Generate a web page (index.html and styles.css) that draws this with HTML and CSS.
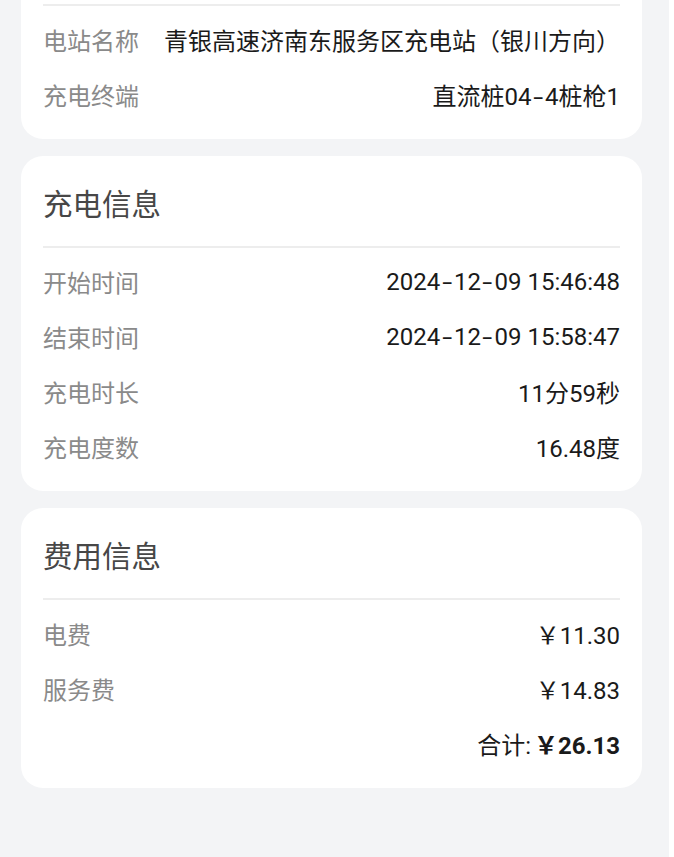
FILE: index.html
```html
<!DOCTYPE html>
<html lang="zh-CN">
<head>
    <meta charset="UTF-8">
    <meta name="viewport" content="width=device-width, initial-scale=1.0">
    <title>订单详情</title>
    <link rel="stylesheet" href="styles.css">
</head>
<body>
    <div class="page">

        <div class="card card-cut">
            <div class="list">
                <div class="row">
                    <span class="label">电站名称</span>
                    <span class="value">青银高速济南东服务区充电站（银川方向）</span>
                </div>
                <div class="row">
                    <span class="label">充电终端</span>
                    <span class="value">直流桩04<span class="dash">-</span>4桩枪1</span>
                </div>
            </div>
        </div>

        <div class="card">
            <div class="card-title">充电信息</div>
            <div class="list">
                <div class="row">
                    <span class="label">开始时间</span>
                    <span class="value">2024<span class="dash">-</span>12<span class="dash">-</span>09 15:46:48</span>
                </div>
                <div class="row">
                    <span class="label">结束时间</span>
                    <span class="value">2024<span class="dash">-</span>12<span class="dash">-</span>09 15:58:47</span>
                </div>
                <div class="row">
                    <span class="label">充电时长</span>
                    <span class="value">11分59秒</span>
                </div>
                <div class="row">
                    <span class="label">充电度数</span>
                    <span class="value">16.48度</span>
                </div>
            </div>
        </div>

        <div class="card">
            <div class="card-title">费用信息</div>
            <div class="list">
                <div class="row">
                    <span class="label">电费</span>
                    <span class="value">￥11.30</span>
                </div>
                <div class="row">
                    <span class="label">服务费</span>
                    <span class="value">￥14.83</span>
                </div>
                <div class="row row-total">
                    <span class="value">合计:<b class="total">￥26.13</b></span>
                </div>
            </div>
        </div>

    </div>
</body>
</html>
```

FILE: styles.css
```css
body {
    margin: 0;
    background-color: #ffffff;
    font-family: Roboto, "Noto Sans CJK SC", sans-serif;
}

.page {
    width: 669px;
    min-height: 100vh;
    box-sizing: border-box;
    background-color: #f3f4f6;
    padding: 0 27px 0 21px;
    display: flex;
    flex-direction: column;
    gap: 17px;
}

.card {
    background-color: #ffffff;
    border-radius: 22px;
    padding: 0 22px;
}

.card-cut {
    border-top-left-radius: 0;
    border-top-right-radius: 0;
    padding-top: 4px;
}

.card-cut .list {
    border-top: 2px solid #ededed;
}

.card-title {
    font-size: 29.5px;
    line-height: 40px;
    color: #474747;
    padding: 29px 0 21px;
    border-bottom: 2px solid #ededed;
}

.list {
    padding: 6px 0 17px;
}

.row {
    height: 55px;
    display: flex;
    align-items: center;
    justify-content: space-between;
    font-size: 24px;
}

.label {
    color: #8a8a8a;
    flex-shrink: 0;
}

.value {
    color: #1a1a1a;
    text-align: right;
}

/* the app font draws a wider hyphen */
.dash {
    display: inline-block;
    transform: scaleX(1.5);
    margin: 0 3.5px;
}

.row-total {
    justify-content: flex-end;
}

.total {
    font-weight: bold;
    margin-left: 3px;
}
```
